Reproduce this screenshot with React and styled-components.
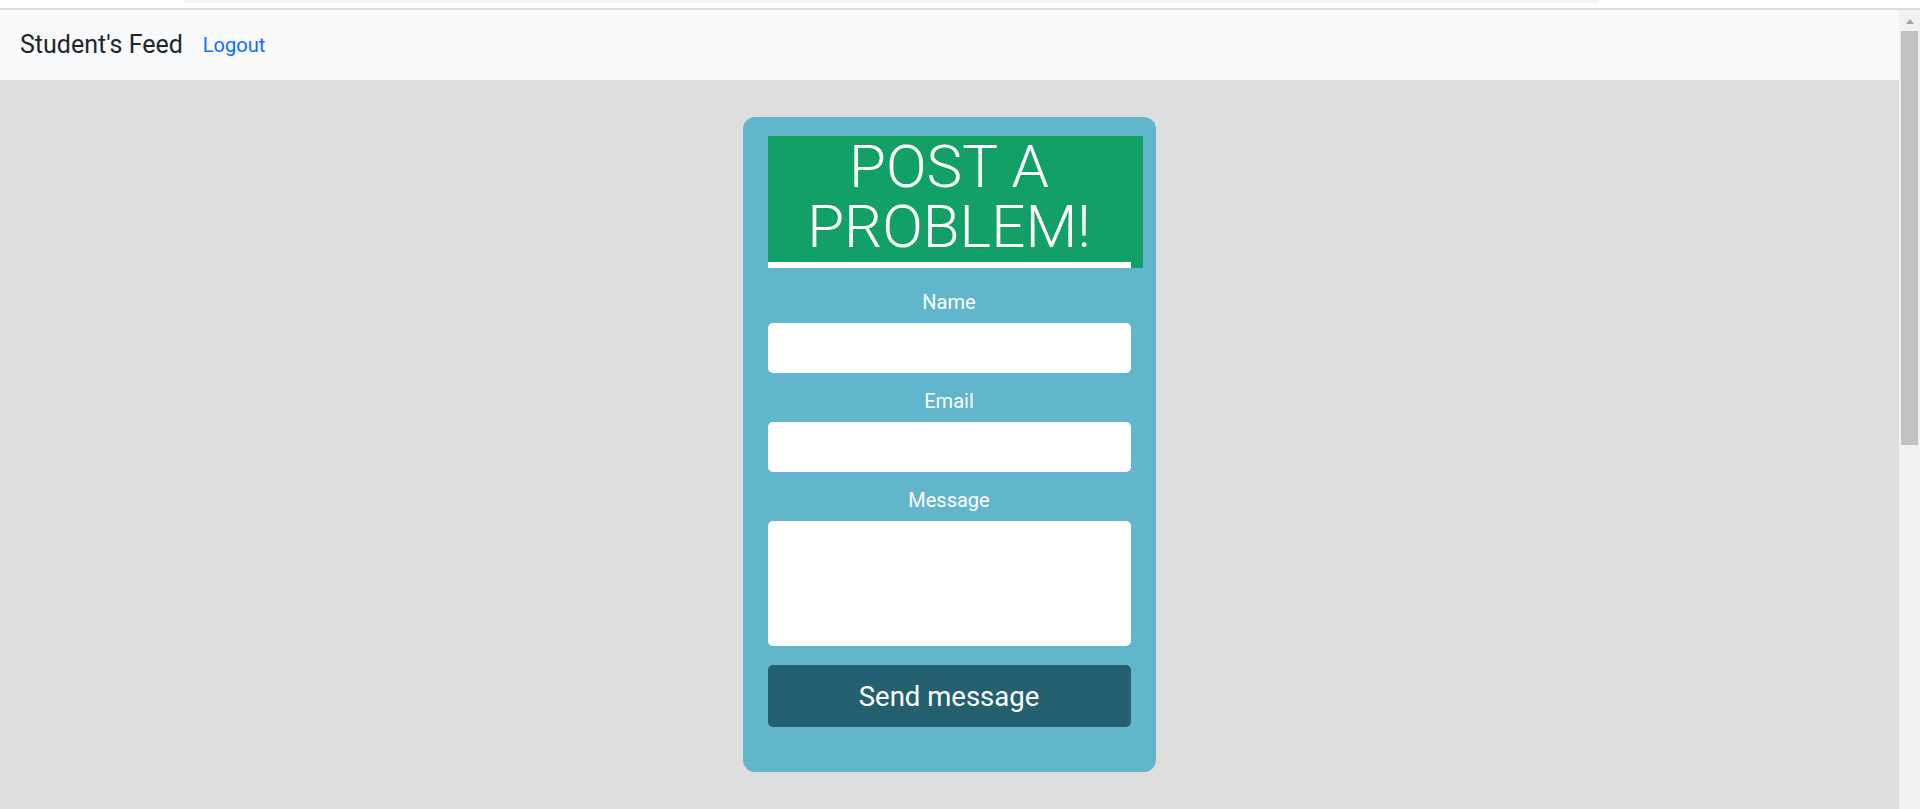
import React from "react";
import styled, { createGlobalStyle } from "styled-components";

const GlobalStyle = createGlobalStyle`
  * { box-sizing: border-box; }
  html, body { margin: 0; padding: 0; height: 100%; overflow: hidden; }
  body {
    font-family: Roboto, "Liberation Sans", Arial, sans-serif;
    background: #ffffff;
  }
  #root { height: 100%; }
`;

const Shell = styled.div`
  height: 100%;
  display: flex;
  flex-direction: column;
`;

// thin strip left at the very top of the capture
const TopStrip = styled.div`
  height: 10px;
  flex: none;
  background: #ffffff;
  border-bottom: 2px solid #dcdce0;
  padding-left: 183px;
`;

const AddressPill = styled.div`
  width: 1416px;
  height: 3px;
  background: #f1f3f4;
  border-radius: 0 0 6px 6px;
`;

const Viewport = styled.div`
  flex: 1;
  display: flex;
  min-height: 0;
`;

const Page = styled.div`
  flex: 1;
  display: flex;
  flex-direction: column;
  background: #dedede;
`;

const Navbar = styled.nav`
  height: 70px;
  flex: none;
  display: flex;
  align-items: center;
  padding-left: 20px;
  background: #f8f9fa;
`;

const Brand = styled.span`
  font-size: 25px;
  line-height: 1.5;
  color: #212529;
  margin-right: 20px;
`;

const NavLink = styled.a`
  font-size: 20px;
  line-height: 1.5;
  color: #0d6efd;
  text-decoration: none;
  cursor: pointer;
`;

const Main = styled.main`
  flex: 1;
  display: flex;
  justify-content: center;
  align-items: flex-start;
  padding-top: 37px;
  padding-right: 1px;
`;

const Card = styled.div`
  width: 413px;
  padding: 19px 25px 45px;
  background: #62b6cb;
  border-radius: 12px;
  display: flex;
  flex-direction: column;
`;

const TitleBox = styled.div`
  width: 375px;
  padding-right: 12px;
  background: #12a066;
`;

const Title = styled.h1`
  margin: 0;
  height: 132px;
  font-size: 60px;
  font-weight: 300;
  line-height: 60px;
  padding-top: 1px;
  color: #ffffff;
  text-align: center;
  border-bottom: 6px solid #ffffff;
`;

const Form = styled.form`
  display: flex;
  flex-direction: column;
`;

const Label = styled.label`
  margin-top: ${(p) => (p.$first ? "19px" : "13px")};
  margin-bottom: 6px;
  font-size: 20px;
  line-height: 30px;
  color: #ffffff;
  text-align: center;
`;

const Input = styled.input`
  height: 50px;
  width: 100%;
  border: none;
  border-radius: 5px;
  background: #ffffff;
  outline: none;
  font-family: inherit;
  font-size: 20px;
  padding: 0 12px;
`;

const TextArea = styled.textarea`
  height: 125px;
  width: 100%;
  border: none;
  border-radius: 5px;
  background: #ffffff;
  outline: none;
  resize: none;
  font-family: inherit;
  font-size: 20px;
  padding: 8px 12px;
`;

const SubmitButton = styled.button`
  margin-top: 19px;
  height: 62px;
  width: 100%;
  border: none;
  border-radius: 5px;
  background: #256070;
  color: #ffffff;
  font-family: inherit;
  font-size: 27.5px;
  cursor: pointer;
`;

const Scrollbar = styled.div`
  width: 21px;
  flex: none;
  background: #f1f1f1;
  display: flex;
  flex-direction: column;
  align-items: center;
  padding-top: 9px;
`;

const ScrollArrow = styled.div`
  width: 0;
  height: 0;
  border-left: 4.5px solid transparent;
  border-right: 4.5px solid transparent;
  border-bottom: 5px solid #a3a3a3;
`;

const ScrollThumb = styled.div`
  margin-top: 7px;
  width: 17px;
  height: 414px;
  background: #c1c1c1;
`;

export default function App() {
  return (
    <>
      <GlobalStyle />
      <Shell>
        <TopStrip>
          <AddressPill />
        </TopStrip>
        <Viewport>
          <Page>
            <Navbar>
              <Brand>Student's Feed</Brand>
              <NavLink>Logout</NavLink>
            </Navbar>
            <Main>
              <Card>
                <TitleBox>
                  <Title>POST A PROBLEM!</Title>
                </TitleBox>
                <Form onSubmit={(e) => e.preventDefault()}>
                  <Label $first htmlFor="name">Name</Label>
                  <Input id="name" type="text" />
                  <Label htmlFor="email">Email</Label>
                  <Input id="email" type="email" />
                  <Label htmlFor="message">Message</Label>
                  <TextArea id="message" />
                  <SubmitButton type="submit">Send message</SubmitButton>
                </Form>
              </Card>
            </Main>
          </Page>
          <Scrollbar>
            <ScrollArrow />
            <ScrollThumb />
          </Scrollbar>
        </Viewport>
      </Shell>
    </>
  );
}
